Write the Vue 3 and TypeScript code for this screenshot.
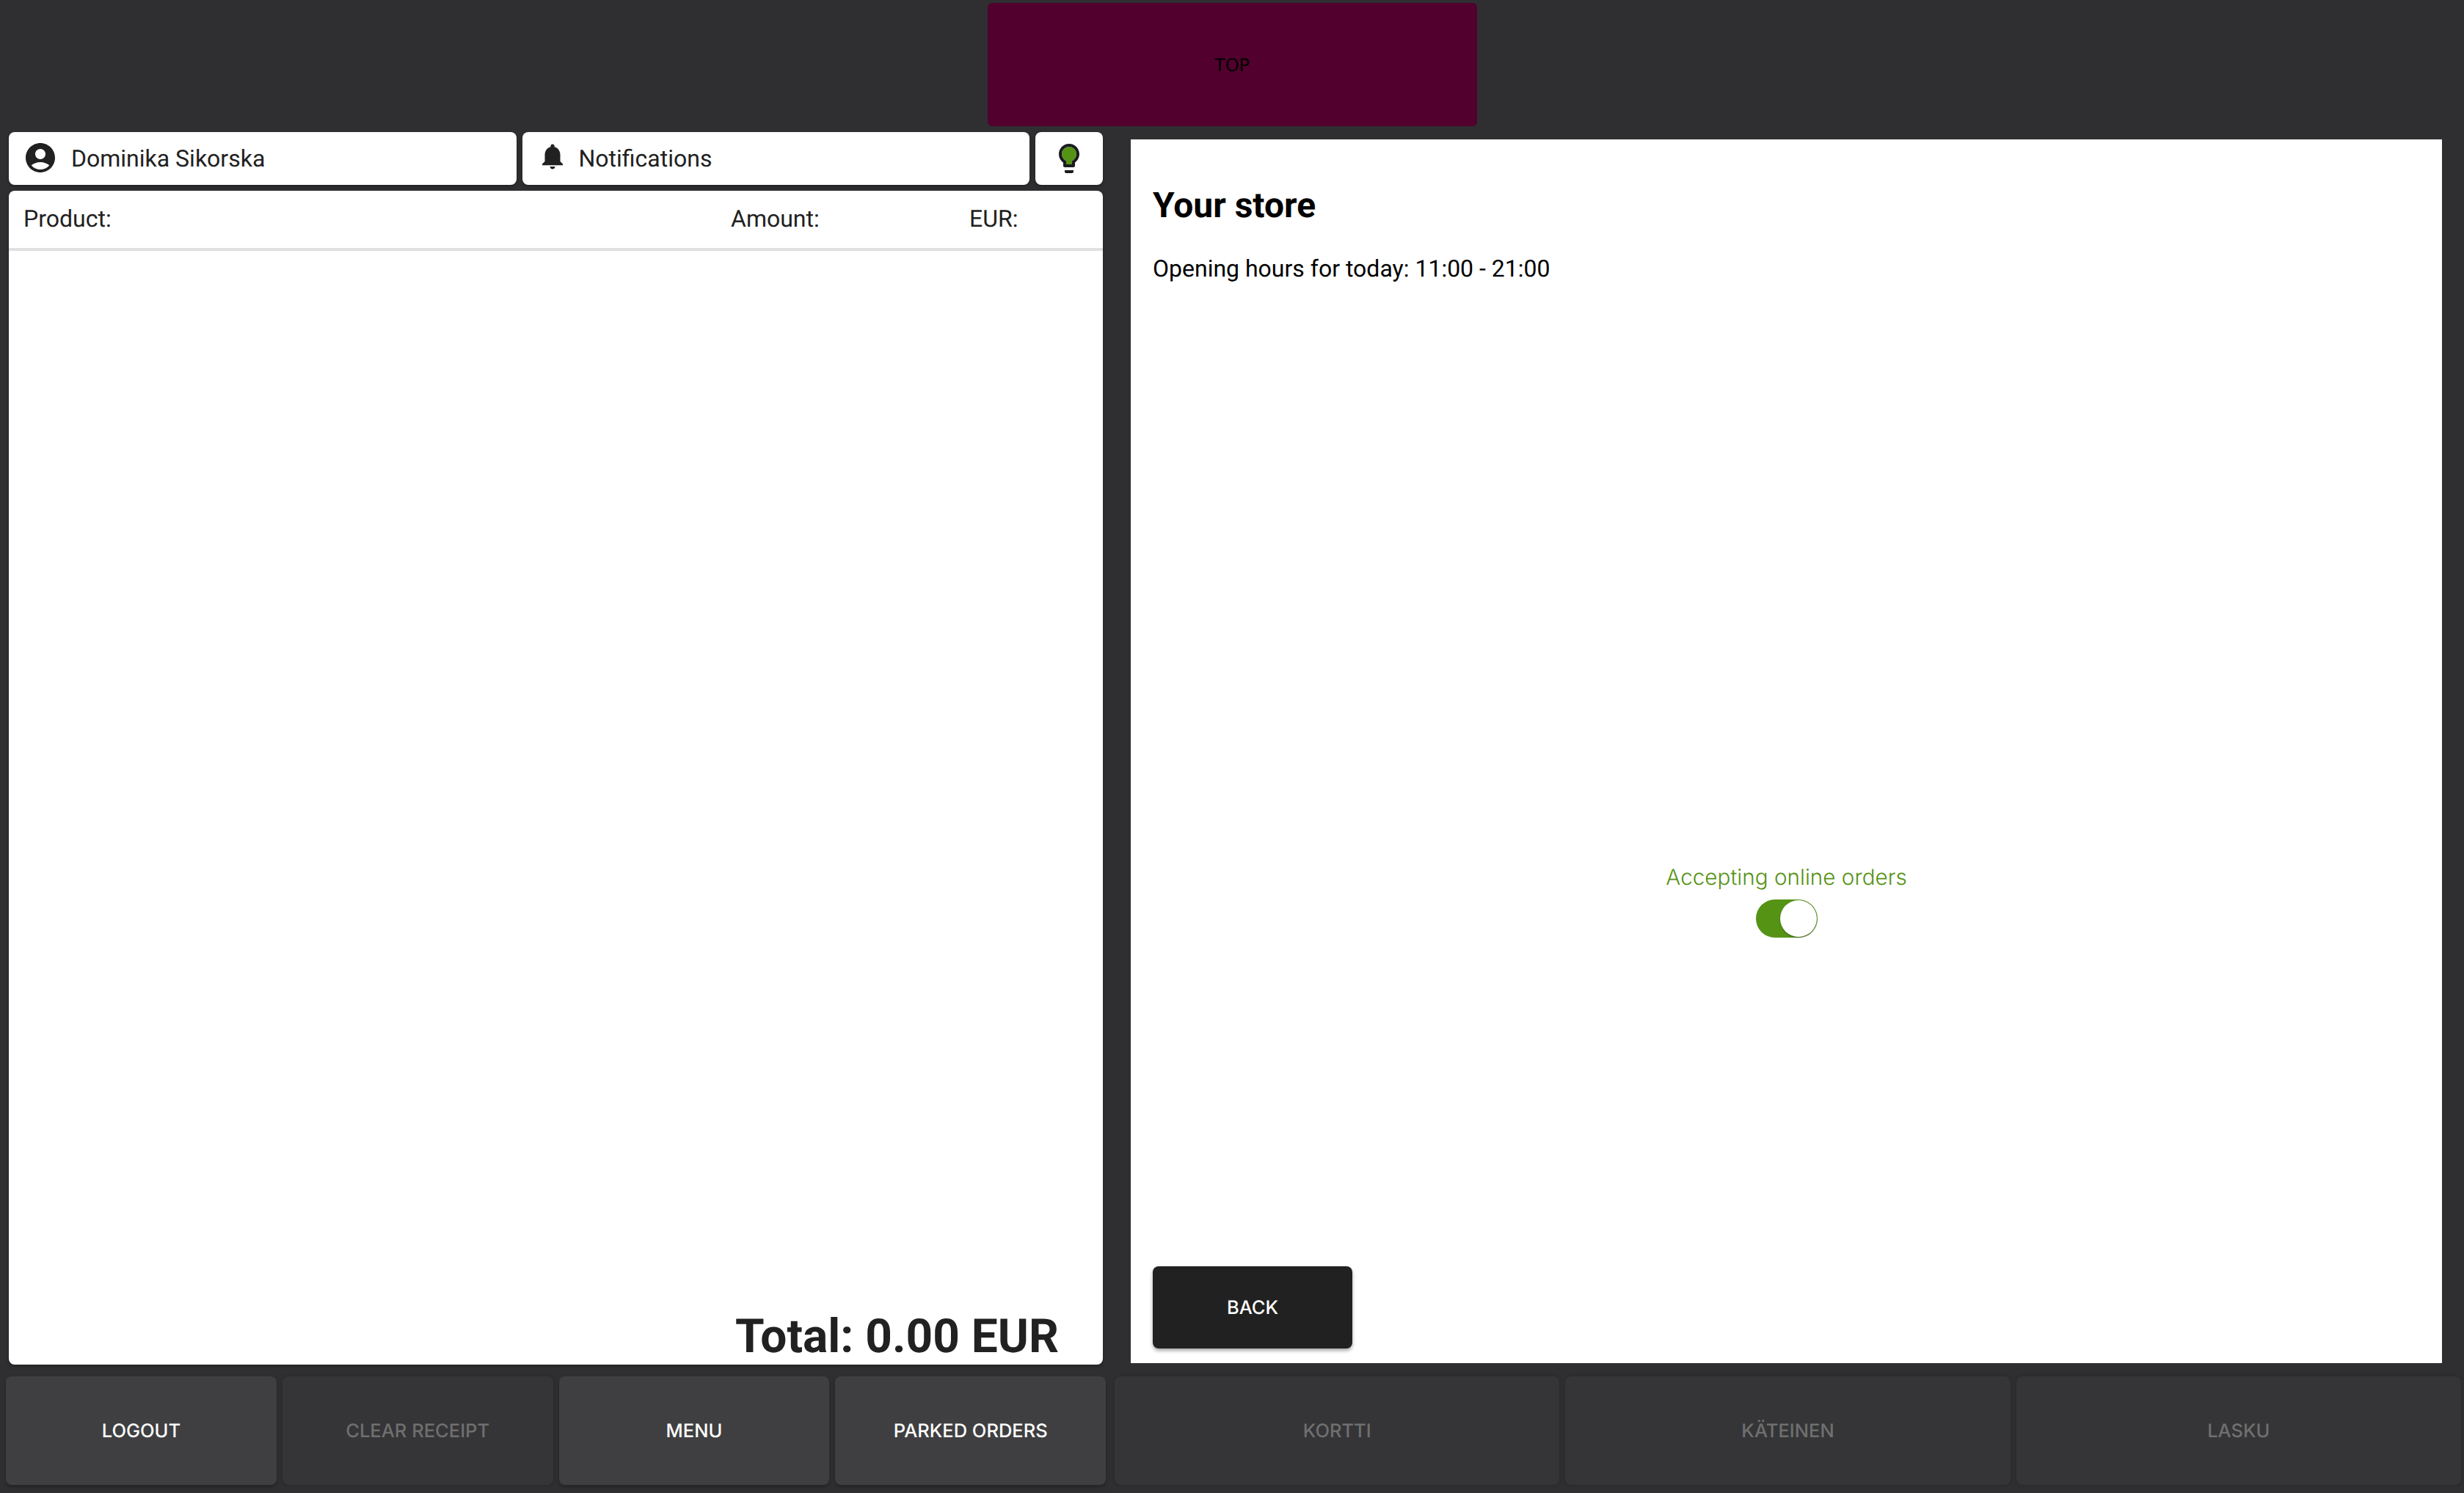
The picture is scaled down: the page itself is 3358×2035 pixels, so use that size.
<script setup lang="ts">
import { ref } from "vue";

const leftActions = [
  { label: "LOGOUT", disabled: false },
  { label: "CLEAR RECEIPT", disabled: true },
  { label: "MENU", disabled: false },
  { label: "PARKED ORDERS", disabled: false },
];
const payActions = ["KORTTI", "KÄTEINEN", "LASKU"];

const acceptingOrders = ref(true);
</script>

<template>
  <div class="page">
    <div class="top-row">
      <div class="top-block">TOP</div>
    </div>

    <main class="main-row">
      <section class="left-col">
        <div class="head-row">
          <div class="head-card">
            <svg class="head-icon" viewBox="0 0 24 24">
              <path
                fill="currentColor"
                d="M12 2C6.48 2 2 6.48 2 12s4.48 10 10 10 10-4.48 10-10S17.52 2 12 2zm0 4c1.93 0 3.5 1.57 3.5 3.5S13.93 13 12 13s-3.5-1.57-3.5-3.5S10.07 6 12 6zm0 14c-2.03 0-4.43-.82-6.14-2.88C7.55 15.8 9.68 15 12 15s4.45.8 6.14 2.12C16.43 19.18 14.03 20 12 20z"
              />
            </svg>
            <span>Dominika Sikorska</span>
          </div>
          <div class="head-card">
            <svg class="head-icon bell" viewBox="0 0 24 24">
              <path
                fill="currentColor"
                d="M12 22c1.1 0 2-.9 2-2h-4c0 1.1.89 2 2 2zm6-6v-5c0-3.07-1.64-5.64-4.5-6.32V4c0-.83-.67-1.5-1.5-1.5s-1.5.67-1.5 1.5v.68C7.63 5.36 6 7.92 6 11v5l-2 2v1h16v-1l-2-2z"
              />
            </svg>
            <span>Notifications</span>
          </div>
          <div class="head-card bulb-card">
            <svg class="bulb-icon" viewBox="0 0 24 24">
              <path
                fill="#559315"
                d="M12 4c-2.76 0-5 2.24-5 5 0 1.63.8 3.16 2.15 4.1l.85.6V16h4v-2.3l.85-.6C16.2 12.16 17 10.63 17 9c0-2.76-2.24-5-5-5z"
              />
              <path
                fill="#1a1c20"
                d="M9 21c0 .55.45 1 1 1h4c.55 0 1-.45 1-1v-1H9v1zm3-19C8.14 2 5 5.14 5 9c0 2.38 1.19 4.47 3 5.74V17c0 .55.45 1 1 1h6c.55 0 1-.45 1-1v-2.26c1.81-1.27 3-3.36 3-5.74 0-3.86-3.14-7-7-7zm2.85 11.1l-.85.6V16h-4v-2.3l-.85-.6C7.8 12.16 7 10.63 7 9c0-2.76 2.24-5 5-5s5 2.24 5 5c0 1.63-.8 3.16-2.15 4.1z"
              />
            </svg>
          </div>
        </div>

        <div class="receipt">
          <div class="receipt-head">
            <span class="col-product">Product:</span>
            <span class="col-amount">Amount:</span>
            <span class="col-eur">EUR:</span>
          </div>
          <div class="receipt-body"></div>
          <div class="receipt-total">Total: 0.00 EUR</div>
        </div>
      </section>

      <section class="store-panel">
        <h2 class="store-title">Your store</h2>
        <p class="store-hours">Opening hours for today: 11:00 - 21:00</p>
        <div class="store-status">
          <div class="status-label">Accepting online orders</div>
          <div class="switch" :class="{ on: acceptingOrders }">
            <div class="switch-knob"></div>
          </div>
        </div>
        <button class="back-btn">BACK</button>
      </section>
    </main>

    <footer class="action-bar">
      <div class="action-group left-group">
        <button
          v-for="item in leftActions"
          :key="item.label"
          class="action-btn"
          :class="{ disabled: item.disabled }"
        >
          {{ item.label }}
        </button>
      </div>
      <div class="action-group right-group">
        <button
          v-for="item in payActions"
          :key="item"
          class="action-btn disabled"
        >
          {{ item }}
        </button>
      </div>
    </footer>
  </div>
</template>

<style scoped>
.page {
  height: 2035px;
  display: flex;
  flex-direction: column;
  background: #2f2f31;
  font-family: Roboto, sans-serif;
  color: #212121;
  overflow: hidden;
  text-rendering: geometricPrecision;
}

.top-row {
  display: flex;
  justify-content: center;
  padding: 4px 0 8px;
}

.top-block {
  width: 667px;
  height: 168px;
  border-radius: 6px;
  background: #52002e;
  color: #000;
  font-family: "DejaVu Sans", sans-serif;
  font-size: 24px;
  padding-top: 2px;
  box-sizing: border-box;
  display: flex;
  align-items: center;
  justify-content: center;
}

.main-row {
  flex: 1;
  min-height: 0;
  display: flex;
  padding: 0 30px 0 12px;
  gap: 38px;
}

.left-col {
  width: 1491px;
  display: flex;
  flex-direction: column;
  gap: 8px;
}

.head-row {
  display: grid;
  grid-template-columns: 1fr 1fr 92px;
  gap: 8px;
}

.head-card {
  height: 72px;
  background: #fff;
  border-radius: 8px;
  display: flex;
  align-items: center;
  gap: 18px;
  padding-left: 19px;
  font-size: 32px;
  box-shadow: 0 2px 4px rgba(0, 0, 0, 0.3);
}

.head-icon {
  width: 48px;
  height: 48px;
  flex: none;
  margin-bottom: 2px;
}

.head-icon.bell {
  width: 42px;
  height: 42px;
  margin: 0 -3px 6px 1px;
}

.bulb-card {
  padding-left: 0;
  justify-content: center;
}

.bulb-icon {
  width: 48px;
  height: 48px;
}

.receipt {
  flex: 1;
  min-height: 0;
  background: #fff;
  border-radius: 8px;
  display: flex;
  flex-direction: column;
  box-shadow: 0 2px 4px rgba(0, 0, 0, 0.3);
}

.receipt-head {
  height: 82px;
  flex: none;
  display: flex;
  align-items: center;
  border-bottom: 4px solid #e0e0e0;
  box-sizing: border-box;
  padding: 0 0 2px 20px;
  font-size: 32px;
}

.col-product {
  width: 964px;
}

.col-amount {
  width: 325px;
}

.receipt-body {
  flex: 1;
}

.receipt-total {
  padding: 0 60px 0 0;
  text-align: right;
  font-size: 64px;
  font-weight: 700;
  line-height: 76px;
}

.store-panel {
  flex: 1;
  min-width: 0;
  margin: 10px 0 2px;
  padding: 0 30px 20px;
  background: #fff;
  display: flex;
  flex-direction: column;
  color: #000;
}

.store-title {
  margin: 60px 0 0;
  font-size: 48px;
  font-weight: 700;
  line-height: 60px;
}

.store-hours {
  margin: 34px 0 0;
  font-size: 32px;
  line-height: 44px;
}

.store-status {
  margin-top: 790px;
  display: flex;
  flex-direction: column;
  align-items: center;
  gap: 12px;
}

.status-label {
  font-family: Inter, sans-serif;
  font-size: 29.7px;
  font-weight: 300;
  color: #559315;
  line-height: 36px;
}

.switch {
  width: 84px;
  height: 52px;
  border-radius: 26px;
  background: #ccc;
  display: flex;
  align-items: center;
  padding: 1px;
  box-sizing: border-box;
}

.switch.on {
  background: #559315;
  justify-content: flex-end;
}

.switch-knob {
  width: 50px;
  height: 50px;
  border-radius: 50%;
  background: #fff;
  box-shadow: 0 1px 2px rgba(0, 0, 0, 0.4);
}

.back-btn {
  margin-top: auto;
  width: 272px;
  height: 112px;
  border: none;
  border-radius: 8px;
  background: #212121;
  color: #fff;
  font-family: Inter, sans-serif;
  font-size: 25.5px;
  font-weight: 500;
  text-rendering: geometricPrecision;
  box-shadow: 0 3px 5px rgba(0, 0, 0, 0.35);
}

.action-bar {
  flex: none;
  display: flex;
  padding: 16px 0 11px;
}

.action-group {
  display: flex;
  gap: 8px;
  box-sizing: border-box;
  padding: 0 4px 0 8px;
}

.left-group {
  width: 45%;
}

.right-group {
  width: 55%;
}

.action-btn {
  flex: 1 1 0;
  min-width: 0;
  height: 148px;
  border: none;
  border-radius: 8px;
  background: #3f3f41;
  color: #fff;
  font-family: Inter, sans-serif;
  font-size: 25.5px;
  font-weight: 500;
  text-rendering: geometricPrecision;
  box-shadow: 0 3px 5px rgba(0, 0, 0, 0.25);
}

.action-btn.disabled {
  background: #353537;
  color: #6f6f6f;
  box-shadow: 0 0 4px rgba(0, 0, 0, 0.2);
}
</style>

<style>
html,
body {
  margin: 0;
  background: #2f2f31;
}
</style>
